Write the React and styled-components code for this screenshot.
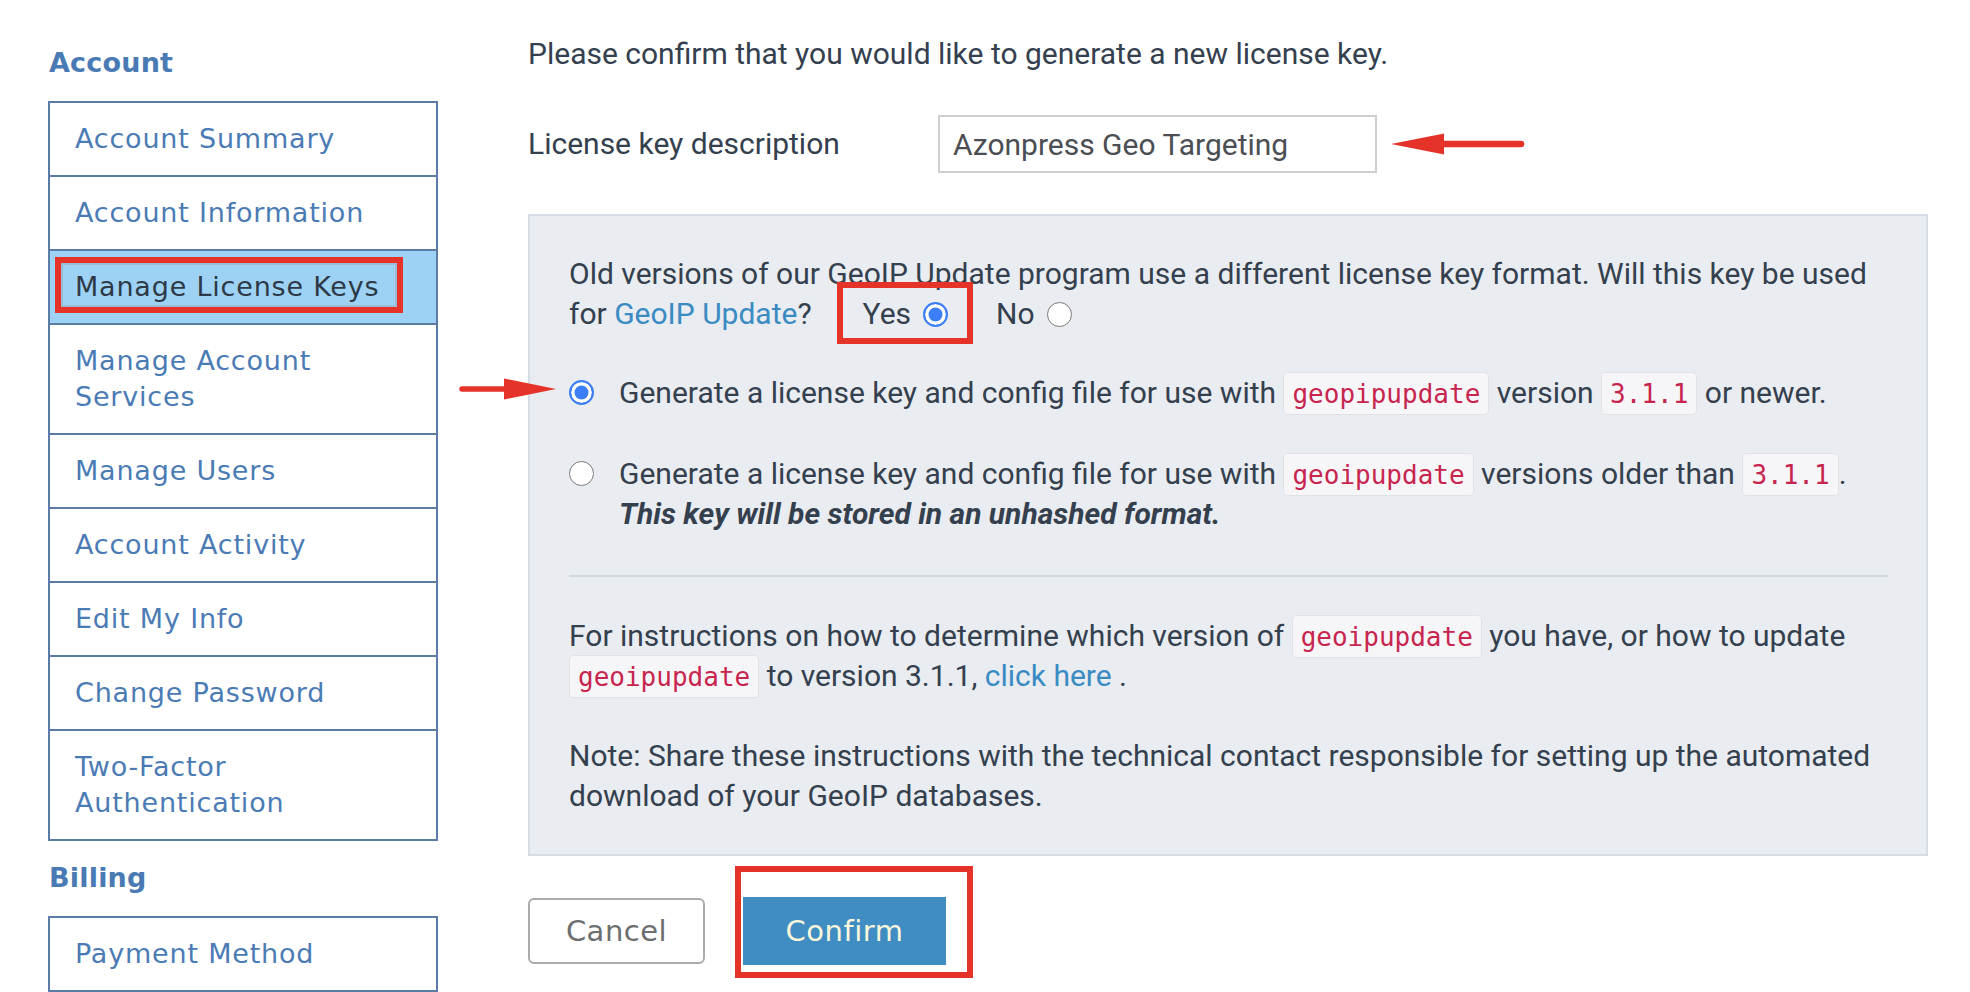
import React from "react";
import styled, { createGlobalStyle } from "styled-components";

const GlobalStyle = createGlobalStyle`
  html, body {
    margin: 0;
    padding: 0;
    background: #fff;
  }
  body {
    font-family: Roboto, "Liberation Sans", sans-serif;
    color: #34404e;
    overflow: hidden;
  }
`;

const accountLinks = [
  "Account Summary",
  "Account Information",
  "Manage License Keys",
  "Manage Account Services",
  "Manage Users",
  "Account Activity",
  "Edit My Info",
  "Change Password",
  "Two-Factor Authentication",
];

const billingLinks = ["Payment Method"];

const LeftArrow = () => (
  <svg width="134" height="24" viewBox="0 0 134 24">
    <polygon points="0,12 53,1.5 53,22.5" fill="#e5332a" />
    <line x1="50" y1="12" x2="130" y2="12" stroke="#e5332a" strokeWidth="6.5" strokeLinecap="round" />
  </svg>
);

const RightArrow = () => (
  <svg width="100" height="24" viewBox="0 0 100 24">
    <line x1="3" y1="12" x2="50" y2="12" stroke="#e5332a" strokeWidth="5.5" strokeLinecap="round" />
    <polygon points="97,12 45,1.5 45,22.5" fill="#e5332a" />
  </svg>
);

const App = () => (
  <>
    <GlobalStyle />
    <Page>
      <Sidebar>
        <NavHeading>Account</NavHeading>
        <Nav>
          {accountLinks.map((label) => (
            <NavItem key={label} $active={label === "Manage License Keys"}>
              {label}
              {label === "Manage License Keys" && <NavHighlight />}
            </NavItem>
          ))}
        </Nav>
        <NavHeading $spaced>Billing</NavHeading>
        <Nav>
          {billingLinks.map((label) => (
            <NavItem key={label}>{label}</NavItem>
          ))}
        </Nav>
      </Sidebar>

      <Main>
        <Intro>Please confirm that you would like to generate a new license key.</Intro>

        <FieldRow>
          <FieldLabel>License key description</FieldLabel>
          <InputWrap>
            <TextInput defaultValue="Azonpress Geo Targeting" />
            <InputPointer>
              <LeftArrow />
            </InputPointer>
          </InputWrap>
        </FieldRow>

        <Panel>
          <Question>
            Old versions of our GeoIP Update program use a different license key format. Will this key be used
            <br />
            for <Link>GeoIP Update</Link>?
            <Choice $marked>
              Yes
              <Radio $checked />
            </Choice>
            <Choice>
              No
              <Radio />
            </Choice>
          </Question>

          <Option>
            <OptionPointer>
              <RightArrow />
            </OptionPointer>
            <RadioSlot>
              <Radio $checked />
            </RadioSlot>
            <OptionText>
              Generate a license key and config file for use with <Code>geopipupdate</Code> version{" "}
              <Code>3.1.1</Code> or newer.
            </OptionText>
          </Option>

          <Option>
            <RadioSlot>
              <Radio />
            </RadioSlot>
            <OptionText>
              Generate a license key and config file for use with <Code>geoipupdate</Code> versions older than{" "}
              <Code>3.1.1</Code>.
              <br />
              <Warning>This key will be stored in an unhashed format.</Warning>
            </OptionText>
          </Option>

          <Divider />

          <Para>
            For instructions on how to determine which version of <Code>geoipupdate</Code> you have, or how to update
            <br />
            <Code>geoipupdate</Code> to version 3.1.1, <Link>click here</Link> .
          </Para>

          <Para $last>
            Note: Share these instructions with the technical contact responsible for setting up the automated
            <br />
            download of your GeoIP databases.
          </Para>
        </Panel>

        <Actions>
          <CancelButton>Cancel</CancelButton>
          <ConfirmWrap>
            <ConfirmButton>Confirm</ConfirmButton>
          </ConfirmWrap>
        </Actions>
      </Main>
    </Page>
  </>
);

const Page = styled.div`
  display: flex;
  align-items: flex-start;
  padding: 34px 42px 0 48px;
`;

const Sidebar = styled.aside`
  width: 390px;
  flex-shrink: 0;
  padding-top: 11px;
  font-family: "DejaVu Sans", Verdana, sans-serif;
`;

const NavHeading = styled.h3`
  margin: ${(p) => (p.$spaced ? "19px" : "0")} 0 20px 1px;
  font-size: 27px;
  line-height: 36px;
  font-weight: 600;
  letter-spacing: 0.2px;
  color: #4a7ab4;
`;

const Nav = styled.nav`
  border: 2px solid #5b7ca6;
`;

const NavItem = styled.div`
  position: relative;
  padding: 18px 16px 18px 25px;
  font-size: 27px;
  line-height: 36px;
  letter-spacing: 0.8px;
  color: ${(p) => (p.$active ? "#2d3946" : "#4b7bb5")};
  background: ${(p) => (p.$active ? "#9dd2f5" : "#fff")};

  & + & {
    border-top: 2px solid #5b7ca6;
  }
`;

const NavHighlight = styled.span`
  position: absolute;
  left: 5px;
  top: 6px;
  width: 348px;
  height: 56px;
  box-sizing: border-box;
  border: 6px solid #e5332a;
  box-shadow: inset 0 0 0 2px #9dbad6;
`;

const Main = styled.main`
  margin-left: 90px;
  width: 1400px;
  font-size: 30px;
  line-height: 40px;
`;

const Intro = styled.p`
  margin: 0;
`;

const FieldRow = styled.div`
  display: grid;
  grid-template-columns: 410px auto;
  align-items: center;
  margin-top: 41px;
`;

const FieldLabel = styled.label`
  display: block;
`;

const InputWrap = styled.div`
  position: relative;
  width: 439px;
`;

const TextInput = styled.input`
  box-sizing: border-box;
  width: 439px;
  height: 58px;
  padding: 0 13px;
  border: 2px solid #cfcfcf;
  background: #fff;
  font-family: Roboto, "Liberation Sans", sans-serif;
  font-size: 30px;
  color: #4b4e53;
  outline: none;
`;

const InputPointer = styled.span`
  position: absolute;
  left: calc(100% + 14px);
  top: 17px;
  display: flex;
`;

const Panel = styled.section`
  margin-top: 41px;
  padding: 38px 38px 38px 39px;
  background: #e9ecf0;
  border: 2px solid #d6dce4;
`;

const Question = styled.p`
  margin: 0 0 39px;
  white-space: nowrap;
`;

const Link = styled.a`
  color: #3b8bc3;
  text-decoration: none;
  cursor: pointer;
`;

const Choice = styled.label`
  position: relative;
  display: inline-block;
  margin-left: ${(p) => (p.$marked ? "51px" : "48px")};

  &::after {
    content: "";
    display: ${(p) => (p.$marked ? "block" : "none")};
    position: absolute;
    left: -26px;
    right: -25px;
    top: -12px;
    bottom: -10px;
    border: 6px solid #e5332a;
  }

  & > span {
    margin-left: 12px;
    vertical-align: -3px;
  }
`;

const Radio = styled.span`
  display: inline-block;
  box-sizing: border-box;
  width: 25px;
  height: 25px;
  border-radius: 50%;
  background: ${(p) => (p.$checked ? "#3b7ef5" : "#fff")};
  border: ${(p) => (p.$checked ? "2px solid #3b7ef5" : "1.5px solid #7a7a7a")};
  box-shadow: ${(p) => (p.$checked ? "inset 0 0 0 3.5px #fff" : "none")};
`;

const Option = styled.div`
  position: relative;
  display: flex;
  align-items: flex-start;
  margin-bottom: 41px;
`;

const OptionPointer = styled.span`
  position: absolute;
  left: -110px;
  top: 4px;
  display: flex;
`;

const RadioSlot = styled.span`
  display: flex;
  flex-shrink: 0;
  margin: 7px 25px 0 0;
`;

const OptionText = styled.div`
  white-space: nowrap;
`;

const Warning = styled.em`
  font-weight: 700;
  font-style: italic;
`;

const Code = styled.code`
  font-family: "DejaVu Sans Mono", "Liberation Mono", monospace;
  font-size: 26px;
  line-height: 26px;
  color: #c7254e;
  background: #f6f6f8;
  border: 1.5px solid #e1e2e7;
  border-radius: 4px;
  padding: 6px 8px 5px;
`;

const Divider = styled.hr`
  margin: 40px 0 39px;
  border: none;
  border-top: 2px solid #d3d9e1;
`;

const Para = styled.p`
  margin: 0 0 ${(p) => (p.$last ? "0" : "40px")};
  white-space: nowrap;
`;

const Actions = styled.div`
  display: flex;
  align-items: center;
  gap: 38px;
  margin-top: 41px;
`;

const ButtonBase = styled.button`
  box-sizing: border-box;
  font-family: "DejaVu Sans", Verdana, sans-serif;
  font-size: 29px;
  letter-spacing: 0.5px;
  cursor: pointer;
`;

const CancelButton = styled(ButtonBase)`
  width: 177px;
  height: 66px;
  background: #fff;
  color: #6c6e70;
  border: 2px solid #a9abae;
  border-radius: 6px;
`;

const ConfirmWrap = styled.div`
  position: relative;

  &::after {
    content: "";
    position: absolute;
    left: -8px;
    right: -27px;
    top: -31px;
    bottom: -13px;
    border: 6px solid #e5332a;
    pointer-events: none;
  }
`;

const ConfirmButton = styled(ButtonBase)`
  display: block;
  width: 203px;
  height: 68px;
  background: #3f8dc2;
  color: #fbf7dc;
  border: none;
  border-radius: 0;
`;

export default App;
